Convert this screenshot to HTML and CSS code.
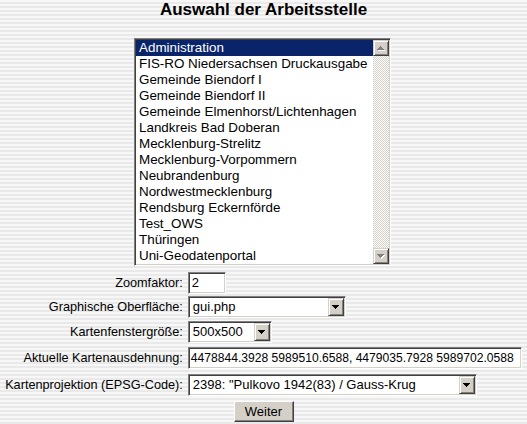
FILE: index.html
```html
<!DOCTYPE html>
<html lang="de">
<head>
<meta charset="utf-8">
<title>Auswahl der Arbeitsstelle</title>
<link rel="stylesheet" href="styles.css">
</head>
<body>
<main class="page">
  <h1 class="title">Auswahl der Arbeitsstelle</h1>
  <div class="listbox">
    <ul class="options">
      <li class="option selected">Administration</li>
      <li class="option">FIS-RO Niedersachsen Druckausgabe</li>
      <li class="option">Gemeinde Biendorf I</li>
      <li class="option">Gemeinde Biendorf II</li>
      <li class="option">Gemeinde Elmenhorst/Lichtenhagen</li>
      <li class="option">Landkreis Bad Doberan</li>
      <li class="option">Mecklenburg-Strelitz</li>
      <li class="option">Mecklenburg-Vorpommern</li>
      <li class="option">Neubrandenburg</li>
      <li class="option">Nordwestmecklenburg</li>
      <li class="option">Rendsburg Eckernförde</li>
      <li class="option">Test_OWS</li>
      <li class="option">Thüringen</li>
      <li class="option">Uni-Geodatenportal</li>
    </ul>
    <div class="vscroll">
      <span class="sbtn">
        <svg class="arrow" width="8" height="5" viewBox="0 0 8 5" shape-rendering="crispEdges">
          <g fill="#ffffff"><rect x="4" y="1" width="1" height="1"/><rect x="3" y="2" width="3" height="1"/><rect x="2" y="3" width="5" height="1"/><rect x="1" y="4" width="7" height="1"/></g>
          <g fill="#808080"><rect x="3" y="0" width="1" height="1"/><rect x="2" y="1" width="3" height="1"/><rect x="1" y="2" width="5" height="1"/><rect x="0" y="3" width="7" height="1"/></g>
        </svg>
      </span>
      <span class="strack"></span>
      <span class="sbtn">
        <svg class="arrow" width="8" height="5" viewBox="0 0 8 5" shape-rendering="crispEdges">
          <g fill="#ffffff"><rect x="1" y="1" width="7" height="1"/><rect x="2" y="2" width="5" height="1"/><rect x="3" y="3" width="3" height="1"/><rect x="4" y="4" width="1" height="1"/></g>
          <g fill="#808080"><rect x="0" y="0" width="7" height="1"/><rect x="1" y="1" width="5" height="1"/><rect x="2" y="2" width="3" height="1"/><rect x="3" y="3" width="1" height="1"/></g>
        </svg>
      </span>
    </div>
  </div>

  <form class="settings">
    <span class="lbl">Zoomfaktor:</span>
    <div class="textbox w-zoom">2</div>

    <span class="lbl">Graphische Oberfläche:</span>
    <div class="select w-gui">
      <span class="select-value">gui.php</span>
      <span class="select-btn"><svg width="7" height="4" viewBox="0 0 7 4" shape-rendering="crispEdges"><g fill="#000"><rect x="0" y="0" width="7" height="1"/><rect x="1" y="1" width="5" height="1"/><rect x="2" y="2" width="3" height="1"/><rect x="3" y="3" width="1" height="1"/></g></svg></span>
    </div>

    <span class="lbl">Kartenfenstergröße:</span>
    <div class="select w-size">
      <span class="select-value">500x500</span>
      <span class="select-btn"><svg width="7" height="4" viewBox="0 0 7 4" shape-rendering="crispEdges"><g fill="#000"><rect x="0" y="0" width="7" height="1"/><rect x="1" y="1" width="5" height="1"/><rect x="2" y="2" width="3" height="1"/><rect x="3" y="3" width="1" height="1"/></g></svg></span>
    </div>

    <span class="lbl">Aktuelle Kartenausdehnung:</span>
    <div class="textbox w-extent">4478844.3928 5989510.6588, 4479035.7928 5989702.0588</div>

    <span class="lbl">Kartenprojektion (EPSG-Code):</span>
    <div class="select w-proj">
      <span class="select-value">2398: "Pulkovo 1942(83) / Gauss-Krug</span>
      <span class="select-btn"><svg width="7" height="4" viewBox="0 0 7 4" shape-rendering="crispEdges"><g fill="#000"><rect x="0" y="0" width="7" height="1"/><rect x="1" y="1" width="5" height="1"/><rect x="2" y="2" width="3" height="1"/><rect x="3" y="3" width="1" height="1"/></g></svg></span>
    </div>
  </form>

  <div class="actions"><span class="button">Weiter</span></div>
</main>
</body>
</html>
```

FILE: styles.css
```css
html, body {
  margin: 0;
  padding: 0;
}

body {
  width: 527px;
  height: 424px;
  overflow: hidden;
  background: repeating-linear-gradient(to bottom, #f7f7f7 0 2px, #e9e9e9 2px 4px);
  font-family: "Liberation Sans", Arial, sans-serif;
  color: #000;
}

.page {
  display: flex;
  flex-direction: column;
  align-items: center;
}

.title {
  margin: 0 0 18px;
  font-size: 17px;
  font-weight: bold;
  line-height: 20px;
}

/* list box */
.listbox {
  display: flex;
  width: 257px;
  height: 228px;
  box-sizing: border-box;
  margin-right: 2px;
  padding: 1px;
  border: 1px solid;
  border-color: #808080 #ffffff #ffffff #808080;
  box-shadow: inset 1px 1px #404040, inset -1px -1px #d4d0c8;
  background: #fff;
}

.options {
  flex: 1;
  list-style: none;
  margin: 0;
  padding: 0;
  font-size: 13.4px;
}

.option {
  height: 16px;
  line-height: 16px;
  padding-left: 3px;
  white-space: nowrap;
}

.selected {
  background: #0a246a;
  color: #fff;
}

.vscroll {
  width: 16px;
  display: flex;
  flex-direction: column;
}

.sbtn {
  width: 16px;
  height: 16px;
  box-sizing: border-box;
  background: #d4d0c8;
  border: 1px solid;
  border-color: #d4d0c8 #404040 #404040 #d4d0c8;
  box-shadow: inset 1px 1px #ffffff, inset -1px -1px #808080;
  display: flex;
  align-items: center;
  justify-content: center;
}

.arrow {
  display: block;
}

.strack {
  flex: 1;
  background: conic-gradient(#d4d0c8 25%, #ffffff 0 50%, #d4d0c8 0 75%, #ffffff 0) 0 0 / 2px 2px;
}

/* form */
.settings {
  display: grid;
  grid-template-columns: auto auto;
  grid-template-rows: 23px 25px 26px 26px 27px;
  column-gap: 5px;
  align-items: center;
  margin: 5px 0 0;
}

.lbl {
  justify-self: end;
  font-size: 12.7px;
  white-space: nowrap;
}

.textbox,
.select {
  justify-self: start;
  height: 22px;
  box-sizing: border-box;
  border: 1px solid;
  border-color: #808080 #ffffff #ffffff #808080;
  box-shadow: inset 1px 1px #404040, inset -1px -1px #d4d0c8;
  background: #fff;
  font-size: 13px;
}

.textbox {
  padding: 1px 1px 1px 3px;
  line-height: 18px;
  white-space: nowrap;
  overflow: hidden;
}

.select {
  display: flex;
  padding: 1px;
}

.select-value {
  flex: 1;
  padding-left: 3px;
  line-height: 18px;
  white-space: nowrap;
  overflow: hidden;
}

.select-btn {
  width: 16px;
  height: 18px;
  box-sizing: border-box;
  background: #d4d0c8;
  border: 1px solid;
  border-color: #d4d0c8 #404040 #404040 #d4d0c8;
  box-shadow: inset 1px 1px #ffffff, inset -1px -1px #808080;
  display: flex;
  align-items: center;
  justify-content: center;
}

.select-btn svg {
  display: block;
}

.w-zoom { width: 38px; }
.w-gui { width: 158px; }
.w-size { width: 84px; }
.w-proj { width: 289px; }
.w-extent { width: 334px; font-size: 12.1px; padding-left: 2px; }

.actions {
  display: flex;
  justify-content: center;
  margin-top: 3px;
}

.button {
  width: 60px;
  height: 21px;
  box-sizing: border-box;
  background: #d4d0c8;
  border: 1px solid;
  border-color: #ffffff #404040 #404040 #ffffff;
  box-shadow: inset -1px -1px #808080;
  font-size: 13px;
  display: flex;
  align-items: center;
  justify-content: center;
}
```
